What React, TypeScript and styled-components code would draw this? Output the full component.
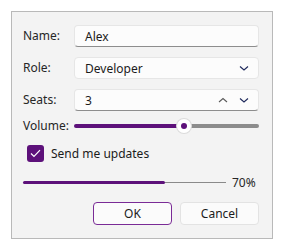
import styled, { createGlobalStyle } from 'styled-components';

const Global = createGlobalStyle`
  html, body { margin: 0; padding: 0; background: #ffffff; }
  body { font-family: "Noto Sans", "Open Sans", sans-serif; font-size: 12px; color: #1b1b1b; }
`;

const ACCENT = '#5d117a';

const Page = styled.div`
  padding: 11px;
`;

const Dialog = styled.div`
  width: 262px;
  height: 228px;
  box-sizing: border-box;
  background: #f3f3f3;
  border: 1px solid #b9b9b9;
  padding: 13px 13px 0 11px;
  display: flex;
  flex-direction: column;
`;

const Row = styled.div<{ $top?: number; $h?: number }>`
  display: flex;
  align-items: center;
  height: ${p => p.$h ?? 22}px;
  margin-top: ${p => p.$top ?? 0}px;
`;

const Label = styled.span`
  width: 51px;
  flex: none;
  color: #262626;
  line-height: 1;
`;

const Field = styled.div<{ $underline?: boolean }>`
  flex: 1;
  height: 22px;
  box-sizing: border-box;
  display: flex;
  align-items: center;
  padding: 0 8px 0 10px;
  background: #fcfcfc;
  border: 1px solid #e6e6e6;
  border-bottom-color: ${p => (p.$underline ? '#8d8d8d' : '#e6e6e6')};
  border-radius: 4px;
  color: #1b1b1b;
`;

const FieldText = styled.span`
  flex: 1;
`;

const Chevrons = styled.span`
  display: flex;
  gap: 9px;
  align-items: center;
`;

const Chevron = ({ up }: { up?: boolean }) => (
  <svg width="12" height="8" viewBox="0 0 12 8">
    <path
      d={up ? 'M2 6 L6 2.5 L10 6' : 'M2 2.5 L6 6 L10 2.5'}
      fill="none"
      stroke={up ? '#5a5a5a' : '#1f2a5c'}
      strokeWidth="1.1"
    />
  </svg>
);

const Slider = styled.div`
  flex: 1;
  position: relative;
  height: 16px;
  display: flex;
  align-items: center;
`;

const TrackFill = styled.div`
  height: 4px;
  background: ${ACCENT};
  border-radius: 2px 0 0 2px;
`;

const TrackRest = styled.div`
  flex: 1;
  height: 4px;
  background: #8c8c8c;
  border-radius: 0 2px 2px 0;
`;

const Thumb = styled.div`
  position: absolute;
  top: 50%;
  width: 14px;
  height: 14px;
  margin: -7px 0 0 -7px;
  border-radius: 50%;
  background: #ffffff;
  box-shadow: 0 0 0 1px #dcdcdc;
  display: flex;
  align-items: center;
  justify-content: center;
  &::after {
    content: '';
    width: 6px;
    height: 6px;
    border-radius: 50%;
    background: ${ACCENT};
  }
`;

const CheckRow = styled.label`
  display: flex;
  align-items: center;
  gap: 7px;
  margin-top: 10px;
  padding-left: 4px;
  height: 18px;
`;

const Box = styled.span`
  width: 17px;
  height: 17px;
  border-radius: 3px;
  background: ${ACCENT};
  display: flex;
  align-items: center;
  justify-content: center;
`;

const Progress = styled.div`
  display: flex;
  align-items: center;
  gap: 6px;
  margin-top: 13px;
  height: 14px;
`;

const ProgressTrack = styled.div`
  flex: 1;
  height: 3px;
  display: flex;
  align-items: center;
`;

const ProgressFill = styled.div`
  height: 3px;
  background: ${ACCENT};
  border-radius: 2px;
`;

const ProgressRest = styled.div`
  flex: 1;
  height: 1px;
  background: #8a8a8a;
`;

const Percent = styled.span`
  width: 27px;
  color: #262626;
`;

const Buttons = styled.div`
  display: flex;
  justify-content: flex-end;
  gap: 8px;
  margin-top: 13px;
`;

const Button = styled.button<{ $primary?: boolean }>`
  width: 79px;
  height: 23px;
  box-sizing: border-box;
  font: inherit;
  color: #1b1b1b;
  background: #fbfbfb;
  border: 1px solid ${p => (p.$primary ? '#7a2b96' : '#e3e3e3')};
  border-width: ${p => (p.$primary ? '1.5px' : '1px')};
  border-radius: 4px;
  padding: 0;
`;

export default function App() {
  const volume = 0.6;
  const progress = 0.7;
  return (
    <Page>
      <Global />
      <Dialog>
        <Row>
          <Label>Name:</Label>
          <Field $underline>
            <FieldText>Alex</FieldText>
          </Field>
        </Row>
        <Row $top={10}>
          <Label>Role:</Label>
          <Field>
            <FieldText>Developer</FieldText>
            <Chevron />
          </Field>
        </Row>
        <Row $top={10}>
          <Label>Seats:</Label>
          <Field $underline>
            <FieldText>3</FieldText>
            <Chevrons>
              <Chevron up />
              <Chevron />
            </Chevrons>
          </Field>
        </Row>
        <Row $top={7} $h={16}>
          <Label>Volume:</Label>
          <Slider>
            <TrackFill style={{ width: `${volume * 100}%` }} />
            <TrackRest />
            <Thumb style={{ left: `calc(7px + ${volume} * (100% - 14px))` }} />
          </Slider>
        </Row>
        <CheckRow>
          <Box>
            <svg width="11" height="9" viewBox="0 0 11 9">
              <path d="M1 4.5 L4 7.5 L10 1.2" fill="none" stroke="#ffffff" strokeWidth="1.2" />
            </svg>
          </Box>
          Send me updates
        </CheckRow>
        <Progress>
          <ProgressTrack>
            <ProgressFill style={{ width: `${progress * 100}%` }} />
            <ProgressRest />
          </ProgressTrack>
          <Percent>70%</Percent>
        </Progress>
        <Buttons>
          <Button $primary>OK</Button>
          <Button>Cancel</Button>
        </Buttons>
      </Dialog>
    </Page>
  );
}
